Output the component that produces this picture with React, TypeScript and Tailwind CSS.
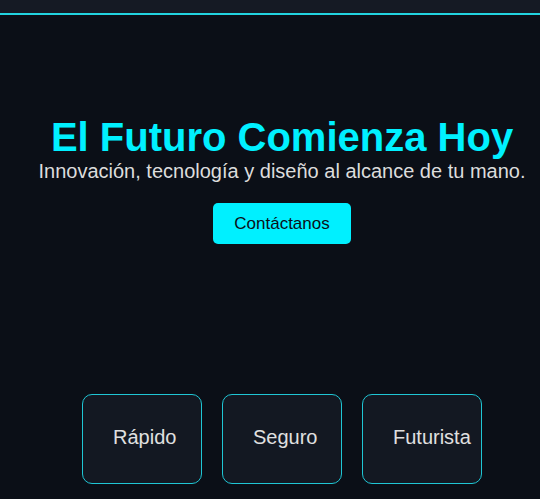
export default function App() {
  const features = ['Rápido', 'Seguro', 'Futurista'];

  return (
    <div className="min-h-[499px] bg-[#0b0f17] font-['Liberation_Sans',Arial,sans-serif] overflow-hidden">
      {/* Header */}
      <header className="h-[15px] bg-[#151a24] border-b-2 border-[#22d3e0]" />

      {/* Hero */}
      <section className="w-[564px] flex flex-col items-center text-center pt-[99px]">
        <h1 className="text-[40px] font-bold text-[#00f0ff] leading-[46px] whitespace-nowrap">
          El Futuro Comienza Hoy
        </h1>
        <p className="text-[20px] text-[#dddddd] leading-[23px] whitespace-nowrap">
          Innovación, tecnología y diseño al alcance de tu mano.
        </p>
        <button className="mt-[20px] bg-[#00f0ff] text-[#0b0f17] text-[17px] px-[21px] py-[11px] rounded-[5px] leading-[19px]">
          Contáctanos
        </button>
      </section>

      {/* Features */}
      <section className="w-[564px] flex justify-center gap-5 mt-[150px]">
        {features.map((f) => (
          <div
            key={f}
            className="w-[120px] h-[90px] flex items-center pl-[30px] pb-1 bg-[#131822] border border-[#1fc6d4] rounded-[10px] text-[20px] text-[#e0e0e0] whitespace-nowrap"
          >
            {f}
          </div>
        ))}
      </section>
    </div>
  );
}
